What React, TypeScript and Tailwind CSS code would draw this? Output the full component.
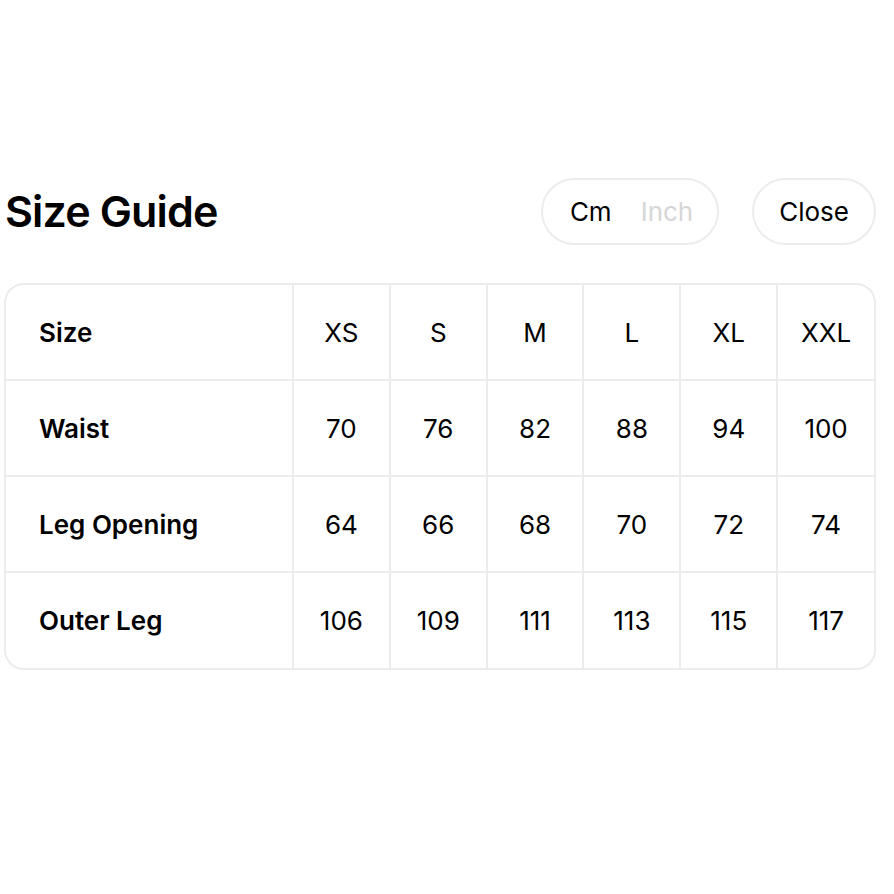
import { useState } from 'react';

const sizes = ['XS', 'S', 'M', 'L', 'XL', 'XXL'];

const rows: { label: string; values: number[] }[] = [
  { label: 'Waist', values: [70, 76, 82, 88, 94, 100] },
  { label: 'Leg Opening', values: [64, 66, 68, 70, 72, 74] },
  { label: 'Outer Leg', values: [106, 109, 111, 113, 115, 117] },
];

export default function App() {
  const [unit, setUnit] = useState<'cm' | 'inch'>('cm');

  return (
    <div className="min-h-screen bg-white pt-[178px] pl-[4px] pr-[18px] text-black font-['Inter',sans-serif]">
      <div className="flex items-center justify-between mb-[38px] pl-[1px]">
        <h1 className="text-[43px] font-semibold tracking-[-0.02em] leading-none">Size Guide</h1>
        <div className="flex items-center gap-[33px]">
          <div className="flex items-center h-[67px] pl-[27px] pr-[24px] gap-[29px] rounded-full border-2 border-[#ececec] text-[26px]">
            <button onClick={() => setUnit('cm')} className={unit === 'cm' ? 'text-black' : 'text-[#d6d6d6]'}>
              Cm
            </button>
            <button onClick={() => setUnit('inch')} className={unit === 'inch' ? 'text-black' : 'text-[#d6d6d6]'}>
              Inch
            </button>
          </div>
          <button className="h-[67px] px-[25px] rounded-full border-2 border-[#ececec] text-[26px]">Close</button>
        </div>
      </div>

      <div className="rounded-[20px] border-2 border-[#ececec] overflow-hidden">
        <table className="w-full table-fixed border-collapse text-[26px]">
          <colgroup>
            <col className="w-[287px]" />
            {sizes.map((s) => (
              <col key={s} />
            ))}
          </colgroup>
          <tbody>
            <tr className="h-[95px]">
              <td className="pl-[33px] font-semibold">Size</td>
              {sizes.map((s) => (
                <td key={s} className="text-center border-l-2 border-[#ececec]">{s}</td>
              ))}
            </tr>
            {rows.map((row) => (
              <tr key={row.label} className="h-[96px] border-t-2 border-[#ececec]">
                <td className="pl-[33px] font-semibold">{row.label}</td>
                {row.values.map((v, i) => (
                  <td key={i} className="text-center border-l-2 border-[#ececec]">
                    {unit === 'cm' ? v : (v / 2.54).toFixed(1)}
                  </td>
                ))}
              </tr>
            ))}
          </tbody>
        </table>
      </div>
    </div>
  );
}
